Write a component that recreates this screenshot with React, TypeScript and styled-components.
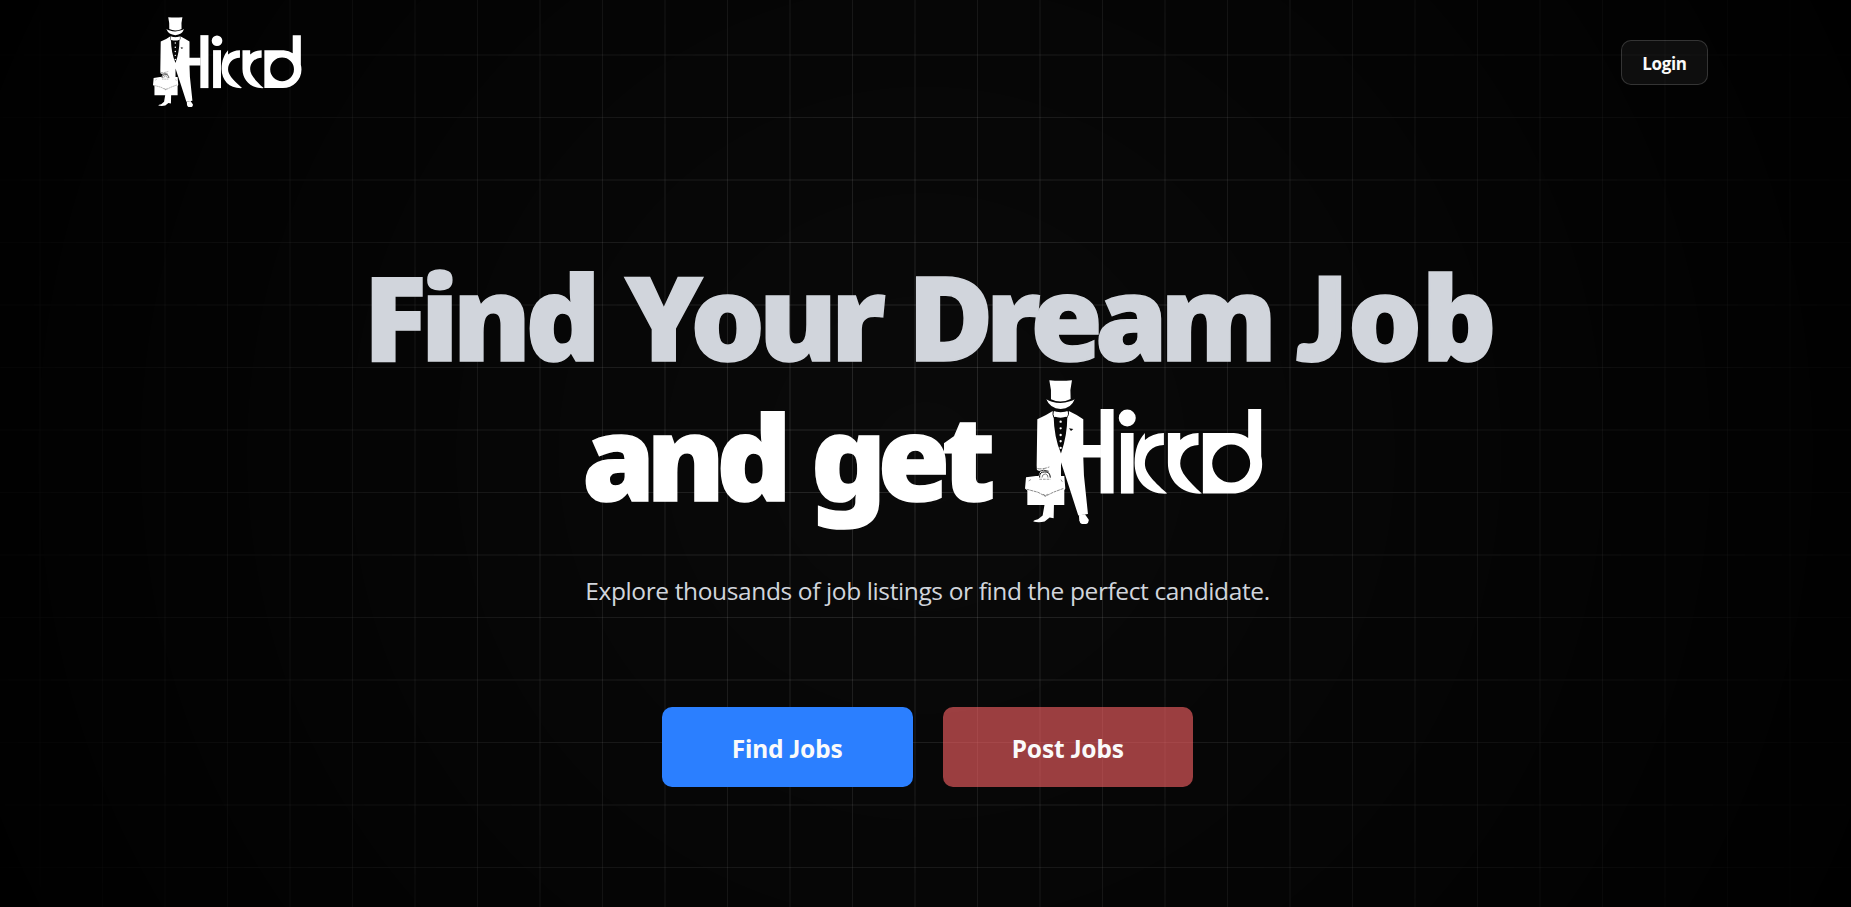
import React from "react";
import styled, { createGlobalStyle } from "styled-components";

const GlobalStyle = createGlobalStyle`
  *, *::before, *::after { box-sizing: border-box; }
  html, body { margin: 0; background: #000; }
  body { overflow: hidden; font-family: "Open Sans", "Noto Sans", sans-serif; color: #fafafa; }
`;

const Page = styled.div`
  position: relative;
  isolation: isolate;
  height: 100vh;
  min-height: 907px;
`;

const GridBackdrop = styled.div`
  position: absolute;
  inset: 0;
  z-index: -1;
  --line: rgba(255, 255, 255, 0.12);
  --soft: rgba(255, 255, 255, 0.065);
  background-color: #0a0a0a;
  background-image:
    linear-gradient(to right, var(--line) 1px, transparent 1px 62px, var(--soft) 62px 64px, transparent 64px),
    linear-gradient(to bottom, var(--line) 1px, transparent 1px 62px, var(--soft) 62px 64px, transparent 64px);
  background-size: 125px 125px;
  background-position: -23px -8px;
  mask-image: radial-gradient(circle 1045px at center, #000, transparent);
`;

const Header = styled.header`
  display: flex;
  align-items: center;
  justify-content: space-between;
  height: 124px;
  padding: 0 143px 0 153px;
`;

const LogoSvg = styled.svg<{ $width: number }>`
  display: block;
  flex: none;
  width: ${(p) => p.$width}px;
  height: auto;
`;

const LoginButton = styled.button`
  width: 87px;
  height: 45px;
  padding: 3px 0 0;
  border: 1px solid rgba(255, 255, 255, 0.16);
  border-radius: 10px;
  background: rgba(255, 255, 255, 0.05);
  color: #fafafa;
  font: 700 17px/24px "Open Sans", sans-serif;
  letter-spacing: -0.35px;
`;

const Hero = styled.main`
  display: flex;
  flex-direction: column;
  align-items: center;
  padding: 122px 0 0 4px;
`;

const Title = styled.h1`
  margin: 0;
  font: 900 117px/140px "Noto Sans", sans-serif;
`;

const TitleLine = styled.span<{ $color: string; $before?: number; $after?: number }>`
  display: flex;
  justify-content: center;
  align-items: center;
  height: 140px;
  padding: 0 ${(p) => p.$after ?? 0}px 0 ${(p) => p.$before ?? 0}px;
  color: ${(p) => p.$color};
  -webkit-text-stroke: 1.6px ${(p) => p.$color};
`;

const Word = styled.span<{ $track: number; $gap?: number }>`
  letter-spacing: ${(p) => p.$track}px;
  margin-left: ${(p) => p.$gap ?? 0}px;
`;

const TallJ = styled.span<{ $heavy?: boolean }>`
  font-family: Lato, sans-serif;
  font-weight: 900;
  ${(p) =>
    p.$heavy &&
    "font-size: 0.94em; line-height: 0; vertical-align: 2px; -webkit-text-stroke-width: 6px; letter-spacing: 2px;"}
`;

const TitleLogo = styled.span`
  margin: -8px 0 0 38px;
`;

const Subtitle = styled.p`
  margin: 48px 0 0;
  color: #d1d5dc;
  font-size: 24.5px;
  line-height: 34px;
  letter-spacing: -0.38px;
`;

const Actions = styled.div`
  display: flex;
  gap: 30px;
  margin-top: 99px;
`;

const ActionButton = styled.button<{ $bg: string }>`
  width: 250.6px;
  height: 80px;
  padding: 3px 0 0;
  border: 0;
  border-radius: 10px;
  background: ${(p) => p.$bg};
  color: #fafafa;
  font: 700 24.5px/34px "Noto Sans", sans-serif;
  letter-spacing: -0.15px;
`;

function Logo({ width }: { width: number }) {
  return (
    <LogoSvg $width={width} viewBox="45 43 713 434" fill="#fff" role="img" aria-label="Hirrd">
      {/* top hat */}
      <path d="M118 44Q152 47 186 44Q179 72 182 100Q152 115 123 101Q125 72 118 44Z" />
      <path d="M109 101Q117 107 126 108Q152 117 180 107Q188 106 194 101Q184 129 152 130Q120 129 109 101Z" />
      {/* jacket, arm and legs */}
      <path d="M127 137L152 140L178 137L200 148L220 161V238H273V276H220L222 330L234 445L205 450L176 360L153 290V340H82L80 300L82 161L108 148Z" />
      <path d="M104 415H132L131 458L119 456L104 468Q86 472 70 468Q71 463 84 461L98 450Z" />
      <path d="M207 449L225 446L236 462Q238 475 222 477Q209 475 208 464Z" />
      {/* shirt front, bow tie and studs */}
      <path d="M131 152Q152 160 172 152Q172 210 153 264Q132 215 131 152Z" fill="#070707" />
      <path d="M130 136Q127 146 132 156M175 136Q178 146 171 156" fill="none" stroke="#070707" strokeWidth="3" />
      <path d="M132 137L148 142H156L172 137V154L156 149H148L132 154Z" />
      <g>
        <circle cx="152" cy="168" r="3.5" />
        <circle cx="152" cy="188" r="3.5" />
        <circle cx="152" cy="208" r="3.5" />
        <circle cx="152" cy="227" r="3.5" />
        <circle cx="152" cy="247" r="3.5" />
      </g>
      <path d="M177 188L190 190L183 196Z" fill="#070707" />
      {/* cuff, briefcase and handle */}
      <path d="M82 309Q98 312 118 304" fill="none" stroke="#070707" strokeWidth="1.5" strokeDasharray="13 3" />
      <path d="M78 312L91 318L84 336H78Z" fill="#070707" />
      <path d="M48 335L78 331H163L166 369L163 374V418H52V375L45 369Z" />
      <path d="M89 336V330Q90 319 104 319Q120 317 121 336" fill="none" stroke="#070707" strokeWidth="3" />
      <path d="M96 336Q96 326 106 325Q114 326 114 336" fill="none" stroke="#070707" strokeWidth="1.5" />
      <path d="M86 318Q100 310 116 317" fill="none" stroke="#070707" strokeWidth="2.5" />
      <path d="M50 371L84 380L106 392L130 380L162 368M99 386L106 390L113 386" fill="none" stroke="#070707" strokeWidth="1.4" strokeDasharray="9 2" />
      <path d="M88 341H122M56 346L64 341M153 342L158 350" fill="none" stroke="#070707" strokeWidth="1.2" strokeDasharray="8 3" />
      {/* wordmark */}
      <path d="M272 130H311V384H272Z" />
      <circle cx="352" cy="157" r="25.5" />
      <path d="M333 202H371V384H333Z" />
      <path d="M405 202V223Q427 203 462 202V238C426 239 405 263 405 294C405 319 424 341 472 384C414 387 374 349 374 292C374 253 386 222 405 202Z" />
      <path d="M474 202H511V223Q530 203 566 202V238C532 239 511 263 511 294C511 319 532 344 576 384C516 387 474 346 474 292Z" />
      <path fillRule="evenodd" d="M579 202H672Q698 203 715 217V130H754V272Q757 283 757 295C757 346 716 384 668 384H579ZM664 237A57 57 0 1 0 664 351A57 57 0 1 0 664 237Z" />
    </LogoSvg>
  );
}

export default function App() {
  return (
    <>
      <GlobalStyle />
      <Page>
        <GridBackdrop />
        <Header>
          <Logo width={148.7} />
          <LoginButton>Login</LoginButton>
        </Header>
        <Hero>
          <Title>
            <TitleLine $color="#d1d5dc" $before={4}>
              <Word $track={-5.8}>Find</Word>
              <Word $track={-6.2} $gap={30}>Your</Word>
              <Word $track={-7.8} $gap={28}>Dream</Word>
              <Word $track={-1} $gap={29}><TallJ $heavy>J</TallJ>ob</Word>
            </TitleLine>
            <TitleLine $color="#fff" $after={10}>
              <Word $track={-8.6}>and</Word>
              <Word $track={-8.4} $gap={28}>get</Word>
              <TitleLogo><Logo width={237.5} /></TitleLogo>
            </TitleLine>
          </Title>
          <Subtitle>Explore thousands of job listings or find the perfect candidate.</Subtitle>
          <Actions>
            <ActionButton $bg="#2b7fff">Find <TallJ>J</TallJ>obs</ActionButton>
            <ActionButton $bg="rgba(255, 100, 103, 0.6)">Post <TallJ>J</TallJ>obs</ActionButton>
          </Actions>
        </Hero>
      </Page>
    </>
  );
}
